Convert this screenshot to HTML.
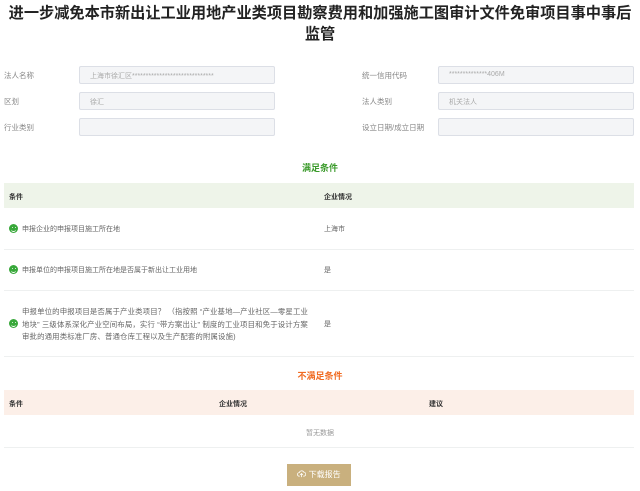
<!DOCTYPE html>
<html><head><meta charset="utf-8"><style>
*{margin:0;padding:0;box-sizing:border-box}
body{width:640px;height:491px;background:#fff;font-family:"Liberation Sans","Noto Sans CJK SC",sans-serif;position:relative;overflow:hidden;color:#666}
.a{position:absolute}
h1{position:absolute;left:0;width:640px;text-align:center;font-size:15.2px;line-height:21px;color:#222;font-weight:bold;top:3px;white-space:nowrap}
.lb{font-size:7.5px;color:#888}
.in{position:absolute;height:18px;background:#f4f5f7;border:1px solid #dcdfe6;border-radius:2px;font-size:7px;color:#aaa;padding:4px 0 0 10px}
.t{font-size:7px;color:#666}
.th{font-size:7px;color:#333;font-weight:bold}
.ic{position:absolute;width:9px;height:9px;border-radius:50%;background:#38a83a}
.ic:before{content:"";position:absolute;left:2px;top:4px;width:5px;height:2.5px;border-bottom:1.2px solid #fff;border-radius:0 0 3px 3px}
.ic:after{content:"";position:absolute;left:2.5px;top:2.5px;width:1.2px;height:1.2px;background:#fff;box-shadow:3px 0 #fff;border-radius:50%}
.ln{position:absolute;left:4px;width:630px;height:1px;background:#eef0f0}
</style></head><body>
<h1>进一步减免本市新出让工业用地产业类项目勘察费用和加强施工图审计文件免审项目事中事后<br>监管</h1>
<div class="a lb" style="left:4px;top:70px">法人名称</div>
<div class="in" style="left:79px;top:66px;width:196px">上海市徐汇区******************************</div>
<div class="a lb" style="left:362px;top:70px">统一信用代码</div>
<div class="in" style="left:438px;top:66px;width:196px">**************406M</div>
<div class="a lb" style="left:4px;top:96px">区划</div>
<div class="in" style="left:79px;top:92px;width:196px">徐汇</div>
<div class="a lb" style="left:362px;top:96px">法人类别</div>
<div class="in" style="left:438px;top:92px;width:196px">机关法人</div>
<div class="a lb" style="left:4px;top:122px">行业类别</div>
<div class="in" style="left:79px;top:118px;width:196px"></div>
<div class="a lb" style="left:362px;top:122px">设立日期/成立日期</div>
<div class="in" style="left:438px;top:118px;width:196px"></div>

<div class="a" style="left:0;width:640px;text-align:center;top:161px;font-size:9px;font-weight:bold;color:#3a9a2a">满足条件</div>
<div class="a" style="left:4px;top:183px;width:630px;height:25px;background:#eef4e9"></div>
<div class="a th" style="left:9px;top:192px">条件</div>
<div class="a th" style="left:324px;top:192px">企业情况</div>
<div class="ic" style="left:9px;top:224px"></div>
<div class="a t" style="left:22px;top:224px">申报企业的申报项目施工所在地</div>
<div class="a t" style="left:324px;top:224px">上海市</div>
<div class="ln" style="top:249px"></div>
<div class="ic" style="left:9px;top:265px"></div>
<div class="a t" style="left:22px;top:265px">申报单位的申报项目施工所在地是否属于新出让工业用地</div>
<div class="a t" style="left:324px;top:265px">是</div>
<div class="ln" style="top:290px"></div>
<div class="ic" style="left:9px;top:319px"></div>
<div class="a t" style="left:22px;top:306px;width:292px;line-height:12.5px;font-size:7.4px;letter-spacing:0.15px">申报单位的申报项目是否属于产业类项目？ （指按照 “产业基地—产业社区—零星工业地块” 三级体系深化产业空间布局，实行 “带方案出让” 制度的工业项目和免于设计方案审批的通用类标准厂房、普通仓库工程以及生产配套的附属设施)</div>
<div class="a t" style="left:324px;top:319px">是</div>
<div class="ln" style="top:356px"></div>

<div class="a" style="left:0;width:640px;text-align:center;top:369px;font-size:9px;font-weight:bold;color:#f06a20">不满足条件</div>
<div class="a" style="left:4px;top:390px;width:630px;height:25px;background:#fcefe8"></div>
<div class="a th" style="left:9px;top:399px">条件</div>
<div class="a th" style="left:219px;top:399px">企业情况</div>
<div class="a th" style="left:429px;top:399px">建议</div>
<div class="a t" style="left:0;width:640px;text-align:center;top:428px;color:#999">暂无数据</div>
<div class="ln" style="top:447px"></div>
<div class="a" style="left:287px;top:464px;width:64px;height:22px;background:#c9b07e;color:#fff;font-size:8px;text-align:center;line-height:22px">
<svg width="9" height="9" viewBox="0 0 10 10" style="vertical-align:-1px"><path d="M3 8H2.5A2 2 0 0 1 2.5 4 2.7 2.7 0 0 1 7.5 3.5 2.2 2.2 0 0 1 7.5 8H7M5 9V5M3.5 6.5 5 5 6.5 6.5" fill="none" stroke="#fff" stroke-width="0.9"/></svg> 下载报告</div>
</body></html>
